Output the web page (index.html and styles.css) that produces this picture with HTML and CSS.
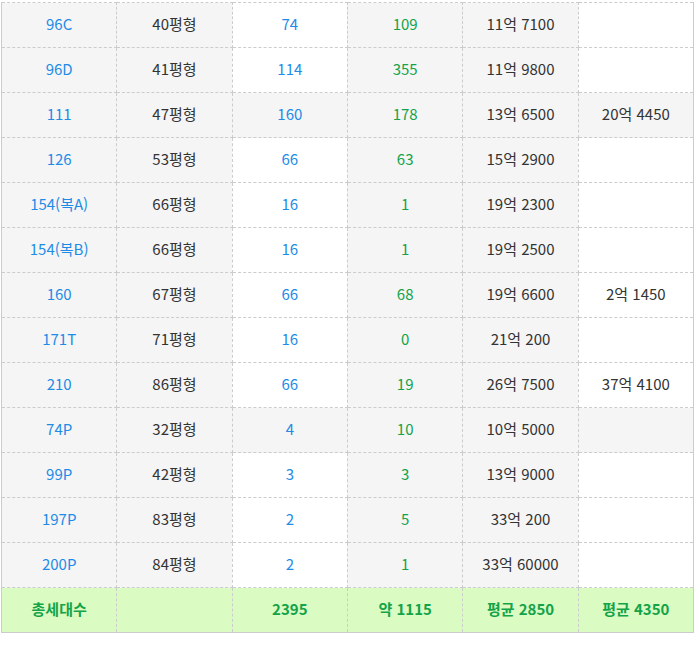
FILE: index.html
```html
<!DOCTYPE html>
<html lang="ko">
<head>
<meta charset="utf-8">
<title>평형별 세대수</title>
<link rel="stylesheet" href="styles.css">
</head>
<body>
<div class="wrap">
<table class="units">
<colgroup><col><col><col><col><col><col></colgroup>
<tbody>
<tr><td class="type">96C</td><td class="area">40평형</td><td class="cnt">74</td><td class="num">109</td><td class="price">11억 7100</td><td class="rent"></td></tr>
<tr><td class="type">96D</td><td class="area">41평형</td><td class="cnt">114</td><td class="num">355</td><td class="price">11억 9800</td><td class="rent"></td></tr>
<tr class="hl"><td class="type">111</td><td class="area">47평형</td><td class="cnt">160</td><td class="num">178</td><td class="price">13억 6500</td><td class="rent">20억 4450</td></tr>
<tr><td class="type">126</td><td class="area">53평형</td><td class="cnt">66</td><td class="num">63</td><td class="price">15억 2900</td><td class="rent"></td></tr>
<tr><td class="type">154(복A)</td><td class="area">66평형</td><td class="cnt">16</td><td class="num">1</td><td class="price">19억 2300</td><td class="rent"></td></tr>
<tr><td class="type">154(복B)</td><td class="area">66평형</td><td class="cnt">16</td><td class="num">1</td><td class="price">19억 2500</td><td class="rent"></td></tr>
<tr><td class="type">160</td><td class="area">67평형</td><td class="cnt">66</td><td class="num">68</td><td class="price">19억 6600</td><td class="rent">2억 1450</td></tr>
<tr><td class="type">171T</td><td class="area">71평형</td><td class="cnt">16</td><td class="num">0</td><td class="price">21억 200</td><td class="rent"></td></tr>
<tr><td class="type">210</td><td class="area">86평형</td><td class="cnt">66</td><td class="num">19</td><td class="price">26억 7500</td><td class="rent">37억 4100</td></tr>
<tr class="hl"><td class="type">74P</td><td class="area">32평형</td><td class="cnt">4</td><td class="num">10</td><td class="price">10억 5000</td><td class="rent"></td></tr>
<tr><td class="type">99P</td><td class="area">42평형</td><td class="cnt">3</td><td class="num">3</td><td class="price">13억 9000</td><td class="rent"></td></tr>
<tr><td class="type">197P</td><td class="area">83평형</td><td class="cnt">2</td><td class="num">5</td><td class="price">33억 200</td><td class="rent"></td></tr>
<tr><td class="type">200P</td><td class="area">84평형</td><td class="cnt">2</td><td class="num">1</td><td class="price">33억 60000</td><td class="rent"></td></tr>
<tr class="total"><td>총세대수</td><td></td><td>2395</td><td>약 1115</td><td>평균 2850</td><td>평균 4350</td></tr>
</tbody>
</table>
</div>
</body>
</html>
```

FILE: styles.css
```css
html, body {
  margin: 0;
  padding: 0;
  background: #ffffff;
}

body {
  font-family: "Noto Sans CJK KR", "Noto Sans", sans-serif;
  font-size: 15px;
  color: #333333;
}

.wrap {
  padding: 2px 1px 0 1px;
}

.units {
  width: 693px;
  border-collapse: collapse;
  table-layout: fixed;
  border-left: 1px solid #cccccc;
  border-right: 1px solid #cccccc;
  border-bottom: 1px solid #cccccc;
}

.units td {
  height: 42px;
  padding: 0 0 2px 0;
  text-align: center;
  vertical-align: middle;
  border: 1px dashed #cccccc;
  background: #f5f5f5;
  line-height: 20px;
}

.units td.cnt,
.units td.rent {
  background: #ffffff;
}

.units tr.hl td {
  background: #f5f5f5;
}

.type,
.cnt {
  color: #1e8ce6;
}

.num {
  color: #14a348;
}

.area,
.price,
.rent {
  color: #333333;
}

.units tr.total td {
  background: #dafcc2;
  color: #14a348;
  font-weight: 600;
  border-bottom: 1px solid #cccccc;
}
```
